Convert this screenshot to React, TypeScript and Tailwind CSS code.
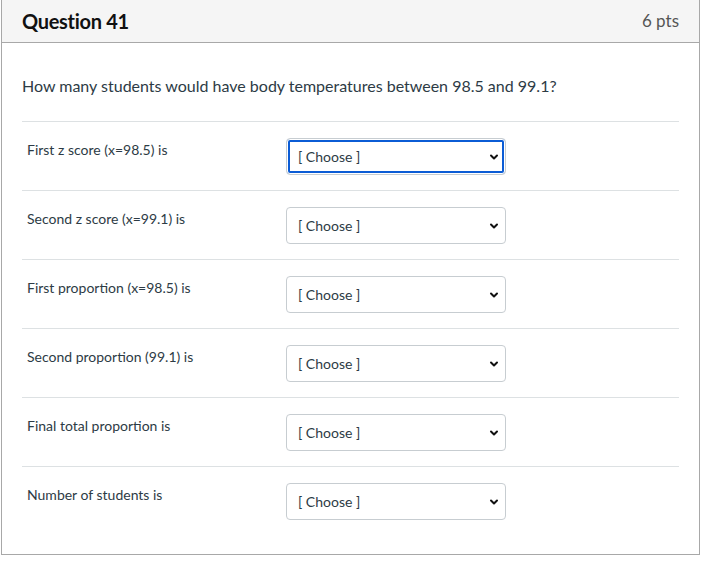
import { ChevronDown } from 'lucide-react';

const rows = [
  'First z score (x=98.5) is',
  'Second z score (x=99.1) is',
  'First proportion (x=98.5) is',
  'Second proportion (99.1) is',
  'Final total proportion is',
  'Number of students is',
];

function ChooseSelect({ focused }: { focused?: boolean }) {
  return (
    <div className="relative w-[220px] h-[37px]">
      <select
        defaultValue=""
        className={`appearance-none w-full h-full rounded-[4px] border border-[#c7cdd1] bg-white pl-[11px] text-[14px] text-[#2d3b45] outline-none ${focused ? 'shadow-[inset_0_0_0_1px_#ffffff,inset_0_0_0_3px_#0b5cd5]' : ''}`}
      >
        <option value="">[ Choose ]</option>
      </select>
      <ChevronDown
        className="pointer-events-none absolute right-[6px] top-[13px] w-[12px] h-[12px] text-[#111]"
        strokeWidth={4}
      />
    </div>
  );
}

export default function App() {
  return (
    <div className="w-[726px] h-[564px] bg-white font-['Lato','Noto_Sans',sans-serif] text-[#2d3b45]">
      <div className="ml-px w-[699px] border-x border-b border-[#a8a8a8]">
        <header className="h-[43px] bg-[#f5f5f5] border-b border-[#a8a8a8] flex items-center justify-between pl-[20px] pr-[20px]">
          <h2 className="text-[20px] font-bold text-[#111] tracking-[-0.3px]">Question 41</h2>
          <span className="text-[17px] text-[#555]">6 pts</span>
        </header>

        <div className="px-[20px] pb-[19px]">
          <p className="pt-[31px] pb-[23px] text-[16px] leading-[24px] text-[#2d3b45]">
            How many students would have body temperatures between 98.5 and 99.1?
          </p>

          {rows.map((label, i) => (
            <div key={label} className="border-t border-[#dde1e3] flex items-start h-[69px] pt-[16px]">
              <span className="w-[264px] pl-[5px] pt-[2px] text-[14px] leading-[20px] text-[#2d3b45]">{label}</span>
              <ChooseSelect focused={i === 0} />
            </div>
          ))}
        </div>
      </div>
    </div>
  );
}
